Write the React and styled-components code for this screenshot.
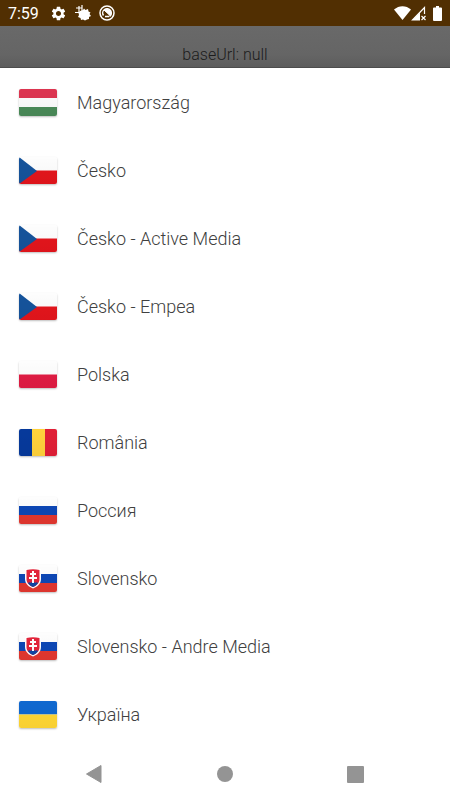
import { useId } from 'react';
import styled, { createGlobalStyle } from 'styled-components';
import { MdSettings } from 'react-icons/md';

const GlobalStyle = createGlobalStyle`
  * {
    box-sizing: border-box;
  }

  body {
    margin: 0;
    font-family: Roboto, "Liberation Sans", sans-serif;
    background: #ffffff;
  }
`;

const Screen = styled.div`
  display: flex;
  flex-direction: column;
  min-height: 100vh;
`;

const StatusBar = styled.header`
  display: flex;
  align-items: center;
  justify-content: space-between;
  height: 26px;
  padding: 0 8px;
  background: #512f02;
  color: #ffffff;
`;

const StatusGroup = styled.div`
  display: flex;
  align-items: center;
  gap: ${({ $gap }) => $gap}px;
`;

const Clock = styled.time`
  margin-right: 3px;
  padding-top: 2px;
  font-size: 16px;
  line-height: 24px;
`;

const Behind = styled.div`
  display: flex;
  align-items: flex-end;
  justify-content: center;
  height: 42px;
  padding-bottom: 2px;
  background: linear-gradient(#696969, #656565 70%, #5c5c5c);
  border-bottom: 1px solid #4c4c4c;
  color: #1c1c1c;
  font-size: 16px;
  font-weight: 300;
  line-height: 20px;
`;

const Sheet = styled.main`
  flex: 1;
  background: #ffffff;
`;

const List = styled.ul`
  margin: 0;
  padding: 0;
  list-style: none;
`;

const Country = styled.button`
  display: flex;
  align-items: center;
  gap: 20px;
  width: 100%;
  height: 68px;
  padding: 0 19px;
  border: 0;
  background: none;
  color: #404040;
  font-family: inherit;
  font-size: 18px;
  font-weight: 300;
  line-height: 24px;
  text-align: left;
  cursor: pointer;
`;

const CountryName = styled.span`
  padding-top: 2px;
`;

const FlagBox = styled.svg`
  flex: none;
  width: 38px;
  height: 27px;
  border-radius: 2px;
  box-shadow: 0 1px 2px rgba(0, 0, 0, 0.25);
`;

const NavBar = styled.nav`
  display: grid;
  grid-template-columns: repeat(3, 1fr);
  height: 52px;
  padding: 0 29px;
  background: #ffffff;
`;

const NavButton = styled.button`
  display: flex;
  align-items: center;
  justify-content: center;
  padding: 0;
  border: 0;
  background: none;
  color: #949494;
  cursor: pointer;
`;

const stripes = (...colors) =>
  colors.map((color, i) => (
    <rect key={i} y={(27 / colors.length) * i} width="38" height={27 / colors.length} fill={color} />
  ));

const czech = (
  <>
    {stripes('#fdfdfd', '#e3151c')}
    <path d="M0 0 18 14 0 27z" fill="#15539b" />
  </>
);

const slovak = (
  <>
    {stripes('#fdfdfd', '#0d47b5', '#e2372f')}
    <path d="M6 4q8-2 16 0v10c0 5-4 8-8 9.500-4-1.500-8-4.500-8-9.500z" fill="#ffffff" />
    <path d="M7.500 5q6.500-1.500 13 0v9c0 4-3 6.500-6.500 8-3.500-1.500-6.500-4-6.500-8z" fill="#e3243a" />
    <path d="M9 18c1-1 2-1 3 0 1-2 3-2 4 0 1-1 2-1 3 0-1 2-3 3-5 4-2-1-4-2-5-4z" fill="#0d47a5" />
    <path d="M14 6v12M11 9h6M10 13h8" stroke="#ffffff" strokeWidth="2" />
  </>
);

const flags = {
  hu: stripes('#dc3550', '#fbfbfb', '#4a8a58'),
  cz: czech,
  pl: stripes('#fdfdfd', '#e01c43'),
  ro: (
    <>
      <rect width="13" height="27" fill="#06399b" />
      <rect x="13" width="13" height="27" fill="#ffd23c" />
      <rect x="26" width="12" height="27" fill="#e01f36" />
    </>
  ),
  ru: stripes('#fdfdfd', '#0d47b5', '#e2372f'),
  sk: slovak,
  ua: stripes('#1068cf', '#ffd634'),
};

const Flag = ({ code }) => {
  const shade = useId();

  return (
    <FlagBox viewBox="0 0 38 27" aria-hidden="true">
      <defs>
        <linearGradient id={shade} x2="0" y2="1">
          <stop stopColor="#000000" stopOpacity="0" />
          <stop offset="1" stopColor="#000000" stopOpacity="0.03" />
        </linearGradient>
      </defs>
      {flags[code]}
      <rect width="38" height="27" fill={`url(#${shade})`} />
    </FlagBox>
  );
};

const countries = [
  { name: 'Magyarország', flag: 'hu' },
  { name: 'Česko', flag: 'cz' },
  { name: 'Česko - Active Media', flag: 'cz' },
  { name: 'Česko - Empea', flag: 'cz' },
  { name: 'Polska', flag: 'pl' },
  { name: 'România', flag: 'ro' },
  { name: 'Россия', flag: 'ru' },
  { name: 'Slovensko', flag: 'sk' },
  { name: 'Slovensko - Andre Media', flag: 'sk' },
  { name: 'Україна', flag: 'ua' },
];

const DebugIcon = () => (
  <svg width="16" height="16" viewBox="0 0 16 16" fill="currentColor">
    <path d="M5 6 8 5l1-1.500 1.500 1.500L13 4l.500 2.500 2 1-1 1.500 1.500 2-2 1v2l-2 .500L10 15.500l-2-1-2 .500-.500-2L3 12l1-2-.500-2z" />
    <path d="M4 1v7M1 3h6M0 7.500h6M7 0v6" stroke="currentColor" strokeWidth="1.200" />
  </svg>
);

const SyncIcon = () => (
  <svg width="16" height="16" viewBox="0 0 16 16" fill="none" stroke="currentColor">
    <circle cx="8" cy="8" r="7" strokeWidth="1.500" />
    <path d="M4.500 10.500A4.300 4.300 0 1 1 10.500 11.500" strokeWidth="1.500" />
    <path d="M5 5l6.500 6A4.500 4.500 0 0 0 5 5z" fill="currentColor" strokeWidth="1" />
    <path d="M6 11.500h4" strokeWidth="1.500" />
  </svg>
);

const WifiIcon = () => (
  <svg width="17" height="14" viewBox="0 0 17 14" fill="currentColor">
    <path d="M0 3.500C5-1 12-1 17 3.500L8.500 14z" />
  </svg>
);

const SignalIcon = () => (
  <svg width="15" height="15" viewBox="0 0 15 15" fill="none" stroke="currentColor">
    <path d="M13.500 8V1.500L1.500 14H9" strokeWidth="1.200" />
    <path d="M9 6.500V14H1.500z" fill="currentColor" stroke="none" />
    <path d="M10.500 10l4 4M14.500 10l-4 4" strokeWidth="1.200" />
  </svg>
);

const BatteryIcon = () => (
  <svg width="9" height="15" viewBox="0 0 9 15" fill="currentColor">
    <path d="M3 0h3v1.500h2a1 1 0 0 1 1 1V14a1 1 0 0 1-1 1H1a1 1 0 0 1-1-1V2.500a1 1 0 0 1 1-1h2z" />
  </svg>
);

const App = () => {
  return (
    <Screen>
      <GlobalStyle />
      <StatusBar>
        <StatusGroup $gap={8}>
          <Clock>7:59</Clock>
          <MdSettings size={17} />
          <DebugIcon />
          <SyncIcon />
        </StatusGroup>
        <StatusGroup $gap={7}>
          <StatusGroup $gap={0}>
            <WifiIcon />
            <SignalIcon />
          </StatusGroup>
          <BatteryIcon />
        </StatusGroup>
      </StatusBar>
      <Behind>baseUrl: null</Behind>
      <Sheet>
        <List>
          {countries.map((country) => (
            <li key={country.name}>
              <Country type="button">
                <Flag code={country.flag} />
                <CountryName>{country.name}</CountryName>
              </Country>
            </li>
          ))}
        </List>
      </Sheet>
      <NavBar>
        <NavButton type="button" aria-label="Back">
          <svg width="16" height="18" viewBox="0 0 16 18" fill="currentColor">
            <path d="M15 0.500v17L0.500 9z" stroke="currentColor" strokeLinejoin="round" />
          </svg>
        </NavButton>
        <NavButton type="button" aria-label="Home">
          <svg width="16" height="16" viewBox="0 0 16 16" fill="currentColor">
            <circle cx="8" cy="8" r="8" />
          </svg>
        </NavButton>
        <NavButton type="button" aria-label="Recent apps">
          <svg width="17" height="17" viewBox="0 0 17 17" fill="currentColor">
            <rect width="17" height="17" rx="1" />
          </svg>
        </NavButton>
      </NavBar>
    </Screen>
  );
};

export default App;
